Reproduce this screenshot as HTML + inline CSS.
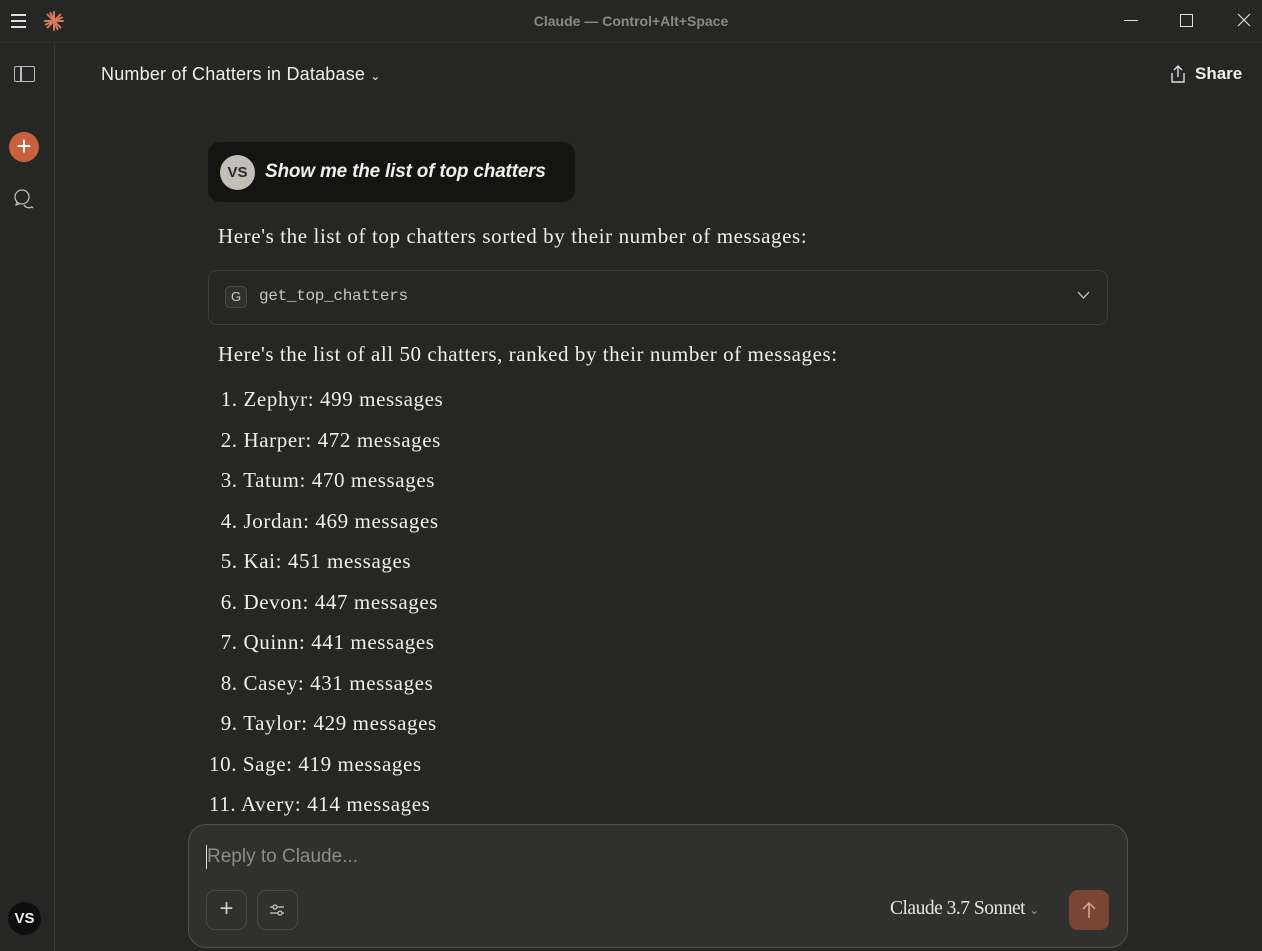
<!DOCTYPE html>
<html><head><meta charset="utf-8"><style>
*{margin:0;padding:0;box-sizing:border-box}
body{width:1262px;height:951px;background:#262624;color:#f0eee6;font-family:"Liberation Sans",sans-serif;position:relative;overflow:hidden}
.abs{position:absolute}
.serif{font-family:"Liberation Serif",serif;font-size:21px;color:#f0eee6;white-space:nowrap;letter-spacing:0.6px}
</style></head><body>
<div class="abs" style="left:0;top:0;width:1262px;height:43px;background:#262624;border-bottom:1px solid #2e2e2c"></div>
<div class="abs" style="left:11px;top:14px;width:15px;height:2px;background:#ddd;box-shadow:0 6px 0 #ddd,0 12px 0 #ddd"></div>
<svg class="abs" style="left:44px;top:11px" width="20" height="20" viewBox="0 0 20 20"><g stroke="#d97757" stroke-width="2" stroke-linecap="round"><line x1="10" y1="1" x2="10" y2="19"/><line x1="1" y1="10" x2="19" y2="10"/><line x1="3.6" y1="3.6" x2="16.4" y2="16.4"/><line x1="3.6" y1="16.4" x2="16.4" y2="3.6"/><line x1="6.5" y1="1.8" x2="13.5" y2="18.2"/><line x1="1.8" y1="13.5" x2="18.2" y2="6.5"/></g></svg>
<div class="abs" style="left:0;width:1262px;top:13px;text-align:center;font-size:14px;font-weight:bold;color:#8a8986">Claude — Control+Alt+Space</div>
<div class="abs" style="left:1124px;top:20px;width:14px;height:1px;background:#ddd"></div>
<div class="abs" style="left:1180px;top:14px;width:13px;height:13px;border:1px solid #ddd"></div>
<svg class="abs" style="left:1237px;top:13px" width="14" height="14"><path d="M1 1L13 13M13 1L1 13" stroke="#ddd" stroke-width="1.2"/></svg>
<div class="abs" style="left:0;top:44px;width:55px;height:907px;border-right:1px solid #3a3a38"></div>
<div class="abs" style="left:14px;top:66px;width:21px;height:16px;border:1.5px solid #bbb;border-radius:2px"></div>
<div class="abs" style="left:20px;top:67px;width:1.5px;height:14px;background:#bbb"></div>
<div class="abs" style="left:9px;top:132px;width:30px;height:30px;border-radius:50%;background:#c9603f;color:#fff;font-size:26px;line-height:28px;text-align:center">+</div>
<svg class="abs" style="left:13px;top:188px" width="22" height="22" viewBox="0 0 22 22" fill="none" stroke="#bbb" stroke-width="1.3"><circle cx="9" cy="9" r="7"/><path d="M4 14l-1 3 3-1M11 17a6 6 0 0 0 8 2l1 1"/></svg>
<div class="abs" style="left:8px;top:902px;width:33px;height:33px;border-radius:50%;background:#0e0e0e;color:#eee;font-weight:bold;font-size:15px;line-height:33px;text-align:center">VS</div>
<div class="abs" style="left:101px;top:64px;font-size:18px;color:#f0eee6;letter-spacing:0.2px">Number of Chatters in Database <span style="font-size:12px">&#8964;</span></div>
<svg class="abs" style="left:1169px;top:64px" width="18" height="20" fill="none" stroke="#ddd" stroke-width="1.4"><path d="M9 13V2M5 6l4-4 4 4M3 9v9h12V9"/></svg>
<div class="abs" style="left:1195px;top:64px;font-size:17px;font-weight:bold;color:#f0eee6">Share</div>
<div class="abs" style="left:208px;top:142px;width:367px;height:60px;background:#141413;border-radius:12px"></div>
<div class="abs" style="left:220px;top:155px;width:35px;height:35px;border-radius:50%;background:#c2c0b6;color:#2a2a28;font-weight:bold;font-size:15px;line-height:35px;text-align:center">VS</div>
<div class="abs" style="left:265px;top:161px;font-size:19px;font-style:italic;font-weight:bold;color:#f0eee6;letter-spacing:-0.2px">Show me the list of top chatters</div>
<div class="abs serif" style="left:218px;top:224px">Here's the list of top chatters sorted by their number of messages:</div>
<div class="abs" style="left:208px;top:270px;width:900px;height:55px;border:1px solid #3d3d3a;border-radius:9px"></div>
<div class="abs" style="left:225px;top:286px;width:22px;height:22px;border:1px solid #4a4a47;background:#30302e;border-radius:5px;font-size:13px;line-height:20px;text-align:center;color:#ccc">G</div>
<div class="abs" style="left:259px;top:287px;font-family:'Liberation Mono',monospace;font-size:16px;color:#c8c6bd;letter-spacing:-0.3px">get_top_chatters</div>
<svg class="abs" style="left:1077px;top:291px" width="13" height="9" fill="none" stroke="#bbb" stroke-width="1.3"><path d="M1 1l5.5 6L12 1"/></svg>
<div class="abs serif" style="left:218px;top:342px;letter-spacing:0.55px">Here's the list of all 50 chatters, ranked by their number of messages:</div>
<div class="abs serif" style="left:209px;top:379px;line-height:40.5px;font-size:21px;letter-spacing:0.6px">
<div>&nbsp;&nbsp;1. Zephyr: 499 messages</div>
<div>&nbsp;&nbsp;2. Harper: 472 messages</div>
<div>&nbsp;&nbsp;3. Tatum: 470 messages</div>
<div>&nbsp;&nbsp;4. Jordan: 469 messages</div>
<div>&nbsp;&nbsp;5. Kai: 451 messages</div>
<div>&nbsp;&nbsp;6. Devon: 447 messages</div>
<div>&nbsp;&nbsp;7. Quinn: 441 messages</div>
<div>&nbsp;&nbsp;8. Casey: 431 messages</div>
<div>&nbsp;&nbsp;9. Taylor: 429 messages</div>
<div>10. Sage: 419 messages</div>
<div>11. Avery: 414 messages</div>
</div>
<div class="abs" style="left:188px;top:824px;width:940px;height:124px;background:#30302e;border:1px solid #52514d;border-radius:18px"></div>
<div class="abs" style="left:206px;top:845px;width:1px;height:24px;background:#ddd"></div>
<div class="abs" style="left:207px;top:846px;font-size:19px;color:#8e8c85">Reply to Claude...</div>
<div class="abs" style="left:206px;top:890px;width:41px;height:40px;border:1px solid #4a4945;border-radius:9px;color:#ccc;font-size:24px;line-height:36px;text-align:center">+</div>
<div class="abs" style="left:257px;top:890px;width:41px;height:40px;border:1px solid #4a4945;border-radius:9px"></div>
<svg class="abs" style="left:269px;top:902px" width="16" height="16" fill="none" stroke="#ccc" stroke-width="1.2"><path d="M1 5h14M1 11h14"/><circle cx="6" cy="5" r="2" fill="#30302e"/><circle cx="11" cy="11" r="2" fill="#30302e"/></svg>
<div class="abs" style="left:890px;top:898px;font-family:'Liberation Serif',serif;font-size:19.5px;color:#e8e6dc;letter-spacing:-0.5px">Claude 3.7 Sonnet <span style="font-size:12px;color:#999">&#8964;</span></div>
<div class="abs" style="left:1069px;top:890px;width:40px;height:40px;border-radius:9px;background:#7b4533"></div>
<svg class="abs" style="left:1079px;top:900px" width="20" height="20" fill="none" stroke="#d9b0a0" stroke-width="1.4"><path d="M10 18V3M4 9l6-6 6 6"/></svg>
</body></html>
